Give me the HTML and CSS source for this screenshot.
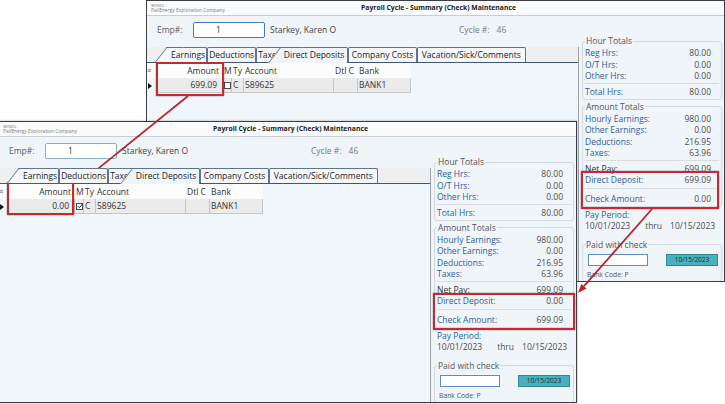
FILE: index.html
```html
<!DOCTYPE html>
<html lang="en">
<head>
<meta charset="utf-8">
<title>Payroll Cycle - Summary (Check) Maintenance</title>
<link rel="stylesheet" href="styles.css">
</head>
<body>
<main class="desk">

  <section class="win win-back">
    <header class="titlebar">
      <div class="brand"><span class="app">WINDL</span><span class="co">PaliEnergy Exploration Company</span></div>
      <h1 class="title">Payroll Cycle - Summary (Check) Maintenance</h1>
    </header>
    <div class="winbody">
      <div class="maincol">
        <div class="emprow">
          <span class="emplbl">Emp#:</span>
          <span class="empinput empinput-focus">1</span>
          <span class="empname">Starkey, Karen O</span>
          <span class="cycle">Cycle #:<span class="cyclenum">46</span></span>
        </div>
        <div class="tabctl">
          <div class="tabstrip">
            <span class="tab tab-first">Earnings</span>
            <span class="tab">Deductions</span>
            <span class="tab">Taxes</span>
            <span class="tab tab-sel">Direct Deposits</span>
            <span class="tab tab-cc">Company Costs</span>
            <span class="tab tab-vac">Vacation/Sick/Comments</span>
          </div>
          <div class="tabpanel">
            <div class="grid">
              <span class="gh gsel">≡</span>
              <span class="gh amt">Amount</span>
              <span class="gh">M</span>
              <span class="gh">Ty</span>
              <span class="gh">Account</span>
              <span class="gh">Dtl C</span>
              <span class="gh">Bank</span>
              <span class="gd gsel"><span class="rowptr"></span></span>
              <span class="gd amt">699.09</span>
              <span class="gd gchk"><span class="chk"></span></span>
              <span class="gd">C</span>
              <span class="gd">589625</span>
              <span class="gd"></span>
              <span class="gd">BANK1</span>
            </div>
          </div>
        </div>
      </div>
      <aside class="totals">
        <fieldset class="grp grp-hours">
          <legend>Hour Totals</legend>
          <div class="trow"><span class="tl">Reg Hrs:</span><span class="tv">80.00</span></div>
          <div class="trow"><span class="tl">O/T Hrs:</span><span class="tv">0.00</span></div>
          <div class="trow"><span class="tl">Other Hrs:</span><span class="tv">0.00</span></div>
          <div class="trow trow-total"><span class="tl">Total Hrs:</span><span class="tv">80.00</span></div>
        </fieldset>
        <fieldset class="grp grp-amt">
          <legend>Amount Totals</legend>
          <div class="trow"><span class="tl">Hourly Earnings:</span><span class="tv">980.00</span></div>
          <div class="trow"><span class="tl">Other Earnings:</span><span class="tv">0.00</span></div>
          <div class="trow"><span class="tl">Deductions:</span><span class="tv">216.95</span></div>
          <div class="trow"><span class="tl">Taxes:</span><span class="tv">63.96</span></div>
          <div class="trow trow-net"><span class="tl tl-dark">Net Pay:</span><span class="tv">699.09</span></div>
          <div class="trow"><span class="tl">Direct Deposit:</span><span class="tv">699.09</span></div>
          <div class="trow trow-check"><span class="tl">Check Amount:</span><span class="tv">0.00</span></div>
        </fieldset>
        <div class="period">
          <div class="tl">Pay Period:</div>
          <div class="dates"><span>10/01/2023</span><span class="thru">thru</span><span class="dto">10/15/2023</span></div>
        </div>
        <fieldset class="grp grp-paid">
          <legend>Paid with check</legend>
          <div class="paidrow"><span class="chkno"></span><span class="paydate">10/15/2023</span></div>
          <div class="bankcode">Bank Code: P</div>
        </fieldset>
      </aside>
    </div>
  </section>

  <section class="win win-front">
    <header class="titlebar">
      <div class="brand"><span class="app">WINDL</span><span class="co">PaliEnergy Exploration Company</span></div>
      <h1 class="title">Payroll Cycle - Summary (Check) Maintenance</h1>
    </header>
    <div class="winbody">
      <div class="maincol">
        <div class="emprow">
          <span class="emplbl">Emp#:</span>
          <span class="empinput">1</span>
          <span class="empname">Starkey, Karen O</span>
          <span class="cycle">Cycle #:<span class="cyclenum">46</span></span>
        </div>
        <div class="tabctl">
          <div class="tabstrip">
            <span class="tab tab-first">Earnings</span>
            <span class="tab">Deductions</span>
            <span class="tab">Taxes</span>
            <span class="tab tab-sel">Direct Deposits</span>
            <span class="tab tab-cc">Company Costs</span>
            <span class="tab tab-vac">Vacation/Sick/Comments</span>
          </div>
          <div class="tabpanel">
            <div class="grid">
              <span class="gh gsel">≡</span>
              <span class="gh amt">Amount</span>
              <span class="gh">M</span>
              <span class="gh">Ty</span>
              <span class="gh">Account</span>
              <span class="gh">Dtl C</span>
              <span class="gh">Bank</span>
              <span class="gd gsel"><span class="rowptr"></span></span>
              <span class="gd amt">0.00</span>
              <span class="gd gchk"><span class="chk chk-on"><svg viewBox="0 0 6 6" width="6" height="6"><path d="M0.8 3.1 L2.4 4.7 L5.3 1.1" fill="none" stroke="#222" stroke-width="1"/></svg></span></span>
              <span class="gd">C</span>
              <span class="gd">589625</span>
              <span class="gd"></span>
              <span class="gd">BANK1</span>
            </div>
          </div>
        </div>
      </div>
      <aside class="totals">
        <fieldset class="grp grp-hours">
          <legend>Hour Totals</legend>
          <div class="trow"><span class="tl">Reg Hrs:</span><span class="tv">80.00</span></div>
          <div class="trow"><span class="tl">O/T Hrs:</span><span class="tv">0.00</span></div>
          <div class="trow"><span class="tl">Other Hrs:</span><span class="tv">0.00</span></div>
          <div class="trow trow-total"><span class="tl">Total Hrs:</span><span class="tv">80.00</span></div>
        </fieldset>
        <fieldset class="grp grp-amt">
          <legend>Amount Totals</legend>
          <div class="trow"><span class="tl">Hourly Earnings:</span><span class="tv">980.00</span></div>
          <div class="trow"><span class="tl">Other Earnings:</span><span class="tv">0.00</span></div>
          <div class="trow"><span class="tl">Deductions:</span><span class="tv">216.95</span></div>
          <div class="trow"><span class="tl">Taxes:</span><span class="tv">63.96</span></div>
          <div class="trow trow-net"><span class="tl tl-dark">Net Pay:</span><span class="tv">699.09</span></div>
          <div class="trow"><span class="tl">Direct Deposit:</span><span class="tv">0.00</span></div>
          <div class="trow trow-check"><span class="tl">Check Amount:</span><span class="tv">699.09</span></div>
        </fieldset>
        <div class="period">
          <div class="tl">Pay Period:</div>
          <div class="dates"><span>10/01/2023</span><span class="thru">thru</span><span class="dto">10/15/2023</span></div>
        </div>
        <fieldset class="grp grp-paid">
          <legend>Paid with check</legend>
          <div class="paidrow"><span class="chkno"></span><span class="paydate">10/15/2023</span></div>
          <div class="bankcode">Bank Code: P</div>
        </fieldset>
      </aside>
    </div>
  </section>

  <div class="callout c1"></div>
  <div class="callout c2"></div>
  <div class="callout c3"></div>
  <div class="callout c4"></div>

  <svg class="arrows" viewBox="0 0 725 404" width="725" height="404">
    <line x1="188" y1="96" x2="91" y2="174.4" stroke="#b8262b" stroke-width="1.8"/>
    <polygon points="84,180 93.2,177.1 88.8,171.6" fill="#b8262b"/>
    <line x1="652" y1="209" x2="584" y2="286.2" stroke="#b8262b" stroke-width="1.8"/>
    <polygon points="578,293 586.6,288.6 581.3,283.9" fill="#b8262b"/>
  </svg>

</main>
</body>
</html>
```

FILE: styles.css
```css
* { box-sizing: border-box; margin: 0; padding: 0; }

html, body {
  width: 725px;
  height: 404px;
  overflow: hidden;
  background: #ffffff;
}

body {
  font-family: "Open Sans", "Noto Sans", sans-serif;
  font-size: 8.5px;
  line-height: 1.2;
  color: #454545;
}

.desk {
  position: relative;
  width: 725px;
  height: 404px;
}

/* ---------- windows ---------- */
.win {
  position: absolute;
  width: 579px;
  height: 282px;
  border: 1px solid #3a3d42;
  background: #f0f5fa;
  display: flex;
  flex-direction: column;
  overflow: hidden;
}
.win-back { left: 146px; top: 0; }
.win-front { left: -2px; top: 121px; box-shadow: 0 0 2px rgba(0, 0, 0, 0.35); }

.titlebar {
  flex: none;
  height: 15px;
  border-bottom: 1px solid #c9ced4;
  background: #fafbfc;
  display: grid;
  grid-template-columns: 1fr auto 1fr;
  align-items: center;
}
.brand {
  display: flex;
  flex-direction: column;
  padding-left: 4px;
  color: #7a7a7a;
  line-height: 1;
}
.brand .app { font-size: 4.3px; }
.brand .co { font-size: 4.9px; margin-top: 1.5px; }
.title {
  font-size: 6.8px;
  font-weight: 700;
  color: #1b1b1b;
  padding-left: 6px;
  white-space: nowrap;
}

.winbody {
  flex: 1;
  display: flex;
  min-height: 0;
}

.maincol {
  flex: none;
  width: 432px;
  display: flex;
  flex-direction: column;
}

/* ---------- employee row ---------- */
.emprow {
  flex: none;
  height: 31px;
  display: flex;
  align-items: flex-start;
  padding: 6px 0 0 10px;
  line-height: 16px;
  white-space: nowrap;
}
.emplbl { width: 36px; color: #5b5b5b; }
.empinput {
  width: 72px;
  height: 16px;
  background: #ffffff;
  border: 1px solid #7fb4c9;
  border-radius: 2px;
  padding-left: 22px;
  line-height: 14px;
  color: #333333;
}
.empinput-focus { border-color: #3b7cc0; }
.empname { width: 194px; padding-left: 5px; color: #444444; }
.cycle { color: #7a7a7a; }
.cyclenum { margin-left: 7px; }

/* ---------- tabs ---------- */
.tabctl {
  flex: 1;
  display: flex;
  flex-direction: column;
  border-right: 1px solid #9aa3ad;
  min-height: 0;
}
.tabstrip {
  flex: none;
  height: 15px;
  display: flex;
  background: #eeeff0;
  padding-left: 19px;
}
.tab {
  position: relative;
  z-index: 1;
  border: 1px solid #5d7590;
  border-bottom: none;
  border-radius: 2px 2px 0 0;
  padding: 0 1px;
  line-height: 14px;
  background: #f6f7f9;
  color: #222222;
  white-space: nowrap;
}
.tab-first { border-left: none; padding-left: 5px; }
.tab-first::before {
  content: "";
  position: absolute;
  top: -1px;
  bottom: 0;
  left: -11px;
  width: 16px;
  background: #f6f7f9;
  border-left: 1px solid #5d7590;
  border-top: 1px solid #5d7590;
  transform: skewX(-38deg);
  transform-origin: bottom left;
  z-index: -1;
}
.tab-sel {
  z-index: 2;
  background: #f0f5fa;
  border-left: none;
  margin-left: -3px;
  padding-left: 4px;
  padding-right: 3px;
  height: 16px;
  margin-bottom: -1px;
}
.tab-sel::before {
  content: "";
  position: absolute;
  top: -1px;
  bottom: 0;
  left: -12px;
  width: 22px;
  background: #f0f5fa;
  border-left: 1px solid #5d7590;
  border-top: 1px solid #5d7590;
  transform: skewX(-38deg);
  transform-origin: bottom left;
  z-index: -1;
}
.tab-cc { padding: 0 2.5px; }
.tab-vac { padding: 0 4px; }

.tabpanel {
  flex: 1;
  border-top: 1px solid #3e5774;
  background: #f1f6fb;
}

/* ---------- grid ---------- */
.grid {
  display: grid;
  grid-template-columns: 9px 67px 9px 12px 90px 24px 53px;
  grid-template-rows: 15px 15px;
  width: 264px;
  white-space: nowrap;
}
.gh {
  background: #fcfcfc;
  line-height: 15px;
  color: #333333;
  padding-left: 1px;
}
.gh.amt { text-align: right; padding-right: 4px; }
.gh.gsel { font-size: 7px; color: #555; padding-left: 0; }
.gd {
  background: #ebebeb;
  border-right: 1px solid #c6c6c6;
  border-bottom: 1px solid #c6c6c6;
  line-height: 14px;
  padding-left: 1px;
  color: #333333;
}
.gd.amt { text-align: right; padding-right: 5px; }
.gd.gsel { background: #f1f6fb; border: none; display: flex; align-items: center; }
.rowptr {
  width: 0;
  height: 0;
  border-left: 4px solid #111111;
  border-top: 3px solid transparent;
  border-bottom: 3px solid transparent;
}
.gchk { display: flex; align-items: center; padding-left: 1px; }
.chk {
  display: block;
  width: 7px;
  height: 7px;
  border: 1px solid #4a4a4a;
  background: #ffffff;
}
.chk svg { display: block; margin: -0.5px 0 0 -0.5px; }

/* ---------- totals ---------- */
.totals {
  flex: none;
  width: 145px;
  padding: 20px 2px 0 3px;
  display: flex;
  flex-direction: column;
}
.grp {
  border: 1px solid #d3d9df;
  border-radius: 3px;
  padding: 1px 2px 1px 2px;
  min-width: 0;
  margin: 0;
}
.grp legend {
  padding: 0 1px;
  line-height: 10px;
  color: #555555;
}
.trow {
  display: flex;
  justify-content: space-between;
  line-height: 11.5px;
  padding-right: 8px;
  white-space: nowrap;
}
.tl { color: #2d5e97; }
.tl-dark { color: #333333; }
.tv { color: #4d4d4d; }
.trow-total { margin-top: 1px; border-top: 1px solid #d7dde3; padding-top: 2.5px; }
.grp-amt { margin-top: 2px; padding-bottom: 2px; }
.trow-net { margin-top: 1px; border-top: 1px solid #d7dde3; padding-top: 2px; }
.trow-check { margin-top: 2.5px; border-top: 1px solid #d7dde3; padding-top: 3.5px; }

.period {
  margin-top: 1.5px;
  padding-left: 3px;
  line-height: 11.5px;
  white-space: nowrap;
}
.dates { display: flex; color: #4d4d4d; }
.thru { margin-left: 15px; }
.dto { margin-left: 8px; }

.grp-paid { margin-top: 8px; flex: 1; }
.paidrow { display: flex; margin-top: 3.5px; }
.chkno {
  width: 60px;
  height: 12px;
  margin-left: 3px;
  background: #ffffff;
  border: 1px solid #5c8fbf;
}
.paydate {
  width: 52px;
  height: 12px;
  margin-left: 18px;
  background: #47b1bd;
  border: 1px solid #2e8b96;
  font-size: 6.5px;
  line-height: 10px;
  text-align: center;
  color: #1c2a33;
}
.bankcode {
  font-size: 6.8px;
  line-height: 10px;
  margin-top: 4px;
  padding-left: 2px;
  color: #555555;
}

/* ---------- annotations ---------- */
.callout {
  position: absolute;
  border: 2.5px solid #c42a2f;
  box-shadow: 0 0 1.5px rgba(60, 0, 0, 0.5);
}
.c1 { left: 156px; top: 62px; width: 68px; height: 34px; }
.c2 { left: 581px; top: 171px; width: 138px; height: 38px; }
.c3 { left: 7px; top: 182px; width: 67px; height: 33px; }
.c4 { left: 433px; top: 293px; width: 142px; height: 37px; }

.arrows {
  position: absolute;
  left: 0;
  top: 0;
  width: 725px;
  height: 404px;
  pointer-events: none;
}
```
